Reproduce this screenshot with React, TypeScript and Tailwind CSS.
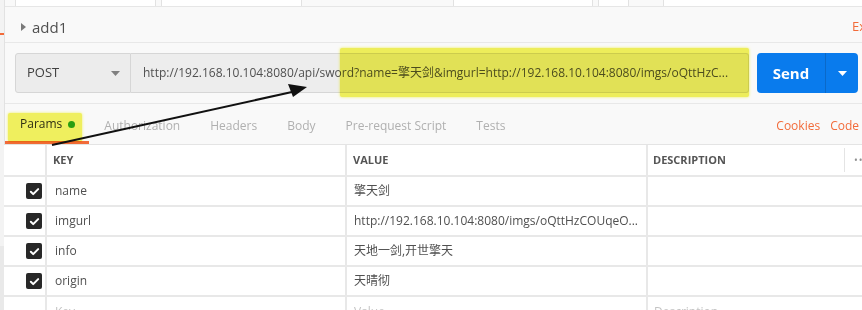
import React from 'react';

const rows = [
  { key: 'name', value: '擎天剑' },
  { key: 'imgurl', value: 'http://192.168.10.104:8080/imgs/oQttHzCOUqeO...' },
  { key: 'info', value: '天地一剑,开世擎天' },
  { key: 'origin', value: '天晴彻' },
];

const tabs = ['Authorization', 'Headers', 'Body', 'Pre-request Script', 'Tests'];

const Check: React.FC = () => (
  <div className="w-[16px] h-[16px] rounded-[2px] bg-[#282828] flex items-center justify-center">
    <svg width="11" height="11" viewBox="0 0 12 12">
      <path d="M2 6.3l2.6 2.6L10 3.4" fill="none" stroke="#fff" strokeWidth="2.2" strokeLinecap="round" strokeLinejoin="round" />
    </svg>
  </div>
);

export default function App() {
  return (
    <div
      className="relative w-[862px] h-[310px] overflow-hidden bg-[#f9f9f9] flex text-[#505050]"
      style={{ fontFamily: '"Open Sans", "Noto Sans CJK SC", sans-serif' }}
    >
      {/* left strip */}
      <div className="w-[5px] shrink-0 bg-[#f3f3f3] border-r border-[#e2e2e2] flex flex-col">
        <div className="h-[33px] shrink-0" />
        <div className="h-[2px] w-[4px] shrink-0 bg-[#f26b3a]" />
        <div className="flex-1" />
        <div className="h-[64px] shrink-0 bg-[#e9e9e9]" />
      </div>

      <div className="flex-1 flex flex-col min-w-0">
        {/* tabs strip, bottom edge */}
        <div className="h-[7px] shrink-0 flex pl-[10px] gap-[5px] border-b border-[#e6e6e6]">
          <div className="w-[141px] bg-white border-x border-[#e2e2e2]" />
          <div className="w-[141px] bg-white border-x border-[#e2e2e2]" />
          <div className="w-[141px]" />
          <div className="w-[140px] bg-white border-x border-[#e2e2e2]" />
          <div className="w-[31px] bg-white border-x border-[#e2e2e2]" />
          <div className="w-[24px]" />
          <div className="flex-1 bg-white border-l border-[#e2e2e2]" />
        </div>

        {/* request name */}
        <div className="h-[36px] shrink-0 flex items-center pt-[5px] border-b border-[#e8e8e8] relative">
          <svg width="6" height="8" viewBox="0 0 6 8" className="ml-[16px]">
            <path d="M0 0L5 4L0 8Z" fill="#7a7a7a" />
          </svg>
          <span className="ml-[5px] text-[15px] text-[#505050]">add1</span>
          <span className="absolute left-[847px] text-[13px] text-[#f26b3a]">Examples</span>
        </div>

        {/* url row */}
        <div className="shrink-0 flex items-center pl-[10px] pt-[10px] pb-[10px] border-b border-[#e8e8e8]">
          <div className="w-[116px] h-[40px] bg-[#ececec] border border-[#d6d6d6] rounded-l-[3px] flex items-center justify-between pl-[11px] pr-[10px]">
            <span className="text-[13px] text-[#404040]">POST</span>
            <svg width="9" height="5" viewBox="0 0 9 5">
              <path d="M0 0H9L4.5 5Z" fill="#808080" />
            </svg>
          </div>
          <div className="w-[618px] h-[40px] bg-[#ededed] border border-l-0 border-[#d6d6d6] rounded-r-[3px] flex items-center pl-[12px] pr-[18px] min-w-0">
            <span className="text-[12px] text-[#505050] truncate">
              http://192.168.10.104:8080/api/sword?name=擎天剑&amp;imgurl=http://192.168.10.104:8080/imgs/oQttHzC...
            </span>
          </div>
          <div className="ml-[8px] w-[101px] h-[40px] rounded-[4px] bg-[#097bed] flex text-white">
            <div className="w-[69px] flex items-center justify-center text-[15px] font-bold border-r border-[#0a69c9]">Send</div>
            <div className="flex-1 flex items-center justify-center">
              <svg width="9" height="5" viewBox="0 0 9 5">
                <path d="M0 0H9L4.5 5Z" fill="#fff" />
              </svg>
            </div>
          </div>
        </div>

        {/* sub tabs */}
        <div className="h-[40px] shrink-0 flex items-center">
          <div className="h-full flex items-center pl-[15px] pr-[14px] border-b-[3px] border-[#f26b3a] pt-[3px]">
            <span className="text-[12px] text-[#303030]">Params</span>
            <span className="ml-[6px] w-[7px] h-[7px] rounded-full bg-[#2aa52a]" />
          </div>
          <div className="flex items-center gap-[30px] ml-[15px] pt-[3px]">
            {tabs.map((t) => (
              <span key={t} className="text-[12px] text-[#b0b0b0]">
                {t}
              </span>
            ))}
          </div>
          <div className="ml-auto flex items-center gap-[10px] text-[12px] text-[#f26b3a] pr-[3px] pt-[3px]">
            <span>Cookies</span>
            <span>Code</span>
          </div>
        </div>

        {/* params table */}
        <div className="flex-1 bg-white border-t border-[#e4e4e4] text-[12px] -ml-px">
          <div className="h-[32px] flex border-b-2 border-[#e8e8e8]">
            <div className="w-[43px] shrink-0 border-r-2 border-[#e8e8e8]" />
            <div className="w-[300px] shrink-0 border-r-2 border-[#e8e8e8] flex items-center pl-[6px] text-[11px] font-bold text-[#555]">KEY</div>
            <div className="w-[301px] shrink-0 border-r-2 border-[#e8e8e8] flex items-center pl-[6px] text-[11px] font-bold text-[#555]">VALUE</div>
            <div className="w-[196px] shrink-0 flex items-center pl-[5px] text-[11px] font-bold text-[#555]">DESCRIPTION</div>
            <div className="flex-1 min-w-0 overflow-hidden flex items-center">
              <div className="h-[24px] shrink-0 border-l border-[#e4e4e4]" />
              <span className="ml-[9px] text-[10px] text-[#909090] tracking-[1px] whitespace-nowrap">•••</span>
            </div>
          </div>
          {rows.map((r) => (
            <div key={r.key} className="h-[30px] flex border-b-2 border-[#e8e8e8]">
              <div className="w-[43px] shrink-0 border-r-2 border-[#e8e8e8] flex items-center justify-end pr-[3px]">
                <Check />
              </div>
              <div className="w-[300px] shrink-0 border-r-2 border-[#e8e8e8] flex items-center pl-[8px]">{r.key}</div>
              <div className="w-[301px] shrink-0 border-r-2 border-[#e8e8e8] flex items-center pl-[7px] overflow-hidden">
                <span className="whitespace-nowrap">{r.value}</span>
              </div>
              <div className="flex-1" />
            </div>
          ))}
          <div className="h-[30px] flex text-[#c4c4c4]">
            <div className="w-[43px] shrink-0 border-r-2 border-[#e8e8e8]" />
            <div className="w-[300px] shrink-0 border-r-2 border-[#e8e8e8] flex items-center pl-[8px]">Key</div>
            <div className="w-[301px] shrink-0 border-r-2 border-[#e8e8e8] flex items-center pl-[7px]">Value</div>
            <div className="flex-1 flex items-center pl-[6px]">Description</div>
          </div>
        </div>
      </div>

      {/* annotation highlights */}
      <div className="absolute left-[340px] top-[48px] w-[409px] h-[49px] bg-[#f3f35c] mix-blend-multiply rounded-[2px] shadow-[0_0_3px_#f3f35c] pointer-events-none" />
      <div className="absolute left-[8px] top-[113px] w-[74px] h-[29px] bg-[#f5f560] mix-blend-multiply rounded-[2px] shadow-[0_0_3px_#f5f560] pointer-events-none" />

      {/* annotation arrow */}
      <svg className="absolute left-0 top-0 pointer-events-none" width="862" height="310">
        <line x1="52" y1="145" x2="292" y2="92" stroke="#111" strokeWidth="2" />
        <path d="M307 87L288 84L293 97Z" fill="#111" />
      </svg>
    </div>
  );
}
